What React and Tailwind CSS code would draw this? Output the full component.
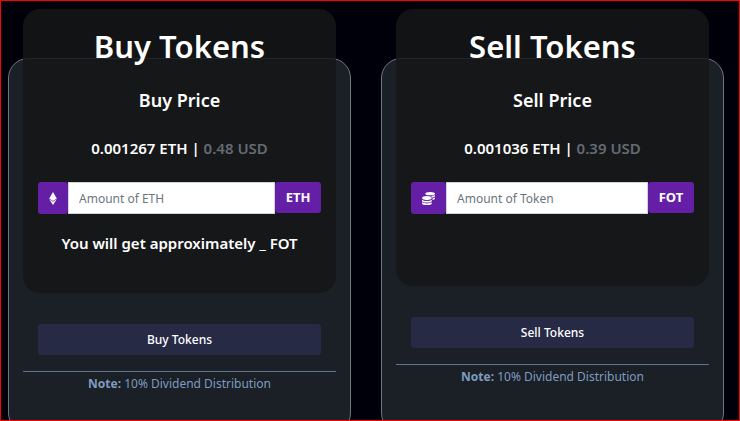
import { useState } from "react";
import { FaCoins, FaEthereum } from "react-icons/fa";

function TradeCard({ id, title, priceLabel, eth, usd, icon, placeholder, unit, estimate }) {
  const [amount, setAmount] = useState("");

  return (
    <form
      onSubmit={(e) => e.preventDefault()}
      className="rounded-[20px] border border-[#70757f] bg-[#1b1f26] px-3.5 pb-9 text-center"
    >
      <section
        className={`-mt-[50px] rounded-[17px] bg-[#151618]/85 px-[15px] pt-4 ${estimate ? "pb-[38px]" : "pb-[72px]"}`}
      >
        <h2 className="mb-5 text-[31px] leading-[43px] font-semibold text-white">{title}</h2>
        <h3 className="mb-6 text-[18px] leading-6 font-semibold text-white">{priceLabel}</h3>
        <p className="mb-[22px] text-[15px] leading-6 font-semibold text-white">
          {eth} ETH | <span className="text-[#646b72]">{usd} USD</span>
        </p>

        <div className="flex items-start text-[12px]">
          <label
            htmlFor={id}
            aria-label={placeholder}
            className="flex h-8 items-center rounded-[3px] bg-[#641fa6] px-[11px] text-white"
          >
            {icon}
          </label>
          <input
            id={id}
            type="text"
            value={amount}
            onChange={(e) => setAmount(e.target.value)}
            placeholder={placeholder}
            className="h-8 min-w-0 flex-1 border border-[#ced4da] bg-white px-2.5 text-[#495057] outline-none placeholder:text-[#6c757d]"
          />
          <span className="flex h-[31px] w-[46px] items-center justify-center rounded-[3px] bg-[#641fa6] text-[13px] font-bold text-white">
            {unit}
          </span>
        </div>

        {estimate && (
          <p className="mt-[17px] text-[15px] leading-6 font-semibold text-white">{estimate}</p>
        )}
      </section>

      <div className="px-[15px] pt-[31px] pb-4">
        <button
          type="submit"
          className="h-[31px] w-full rounded-[3px] bg-[#262a45] text-[12px] font-medium text-white"
        >
          {title}
        </button>
      </div>
      <p className="border-t border-[#5f7296] text-[12px] leading-6 text-[#7e9cc0]">
        <strong className="font-bold">Note:</strong> 10% Dividend Distribution
      </p>
    </form>
  );
}

function App() {
  return (
    <main className="h-screen overflow-hidden border border-[#ff0000] bg-[#00000a] pt-[57px] pr-[15px] pl-[7px] font-['Noto_Sans',sans-serif]">
      <div className="grid grid-cols-2 gap-[30px]">
        <TradeCard
          id="eth-amount"
          title="Buy Tokens"
          priceLabel="Buy Price"
          eth="0.001267"
          usd="0.48"
          icon={<FaEthereum className="h-[13px] w-2" />}
          placeholder="Amount of ETH"
          unit="ETH"
          estimate="You will get approximately _ FOT"
        />
        <TradeCard
          id="token-amount"
          title="Sell Tokens"
          priceLabel="Sell Price"
          eth="0.001036"
          usd="0.39"
          icon={<FaCoins className="h-[13px] w-[13px]" />}
          placeholder="Amount of Token"
          unit="FOT"
        />
      </div>
    </main>
  );
}

export default App;
